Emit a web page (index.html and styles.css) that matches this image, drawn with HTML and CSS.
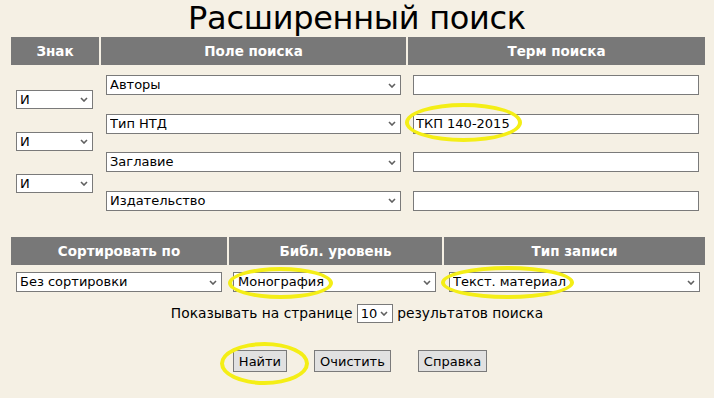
FILE: index.html
```html
<!DOCTYPE html>
<html lang="ru">
<head>
<meta charset="utf-8">
<title>Расширенный поиск</title>
<link rel="stylesheet" href="styles.css">
</head>
<body>
<div class="page">
  <h1 class="title">Расширенный поиск</h1>

  <div class="table main">
    <div class="th">Знак</div>
    <div class="th">Поле поиска</div>
    <div class="th">Терм поиска</div>

    <div class="col col-sign">
      <select class="sel sel-sign"><option>И</option></select>
      <select class="sel sel-sign"><option>И</option></select>
      <select class="sel sel-sign"><option>И</option></select>
    </div>
    <div class="col col-field">
      <select class="sel sel-field"><option>Авторы</option></select>
      <select class="sel sel-field"><option>Тип НТД</option></select>
      <select class="sel sel-field"><option>Заглавие</option></select>
      <select class="sel sel-field"><option>Издательство</option></select>
    </div>
    <div class="col col-term">
      <input class="inp" type="text" value="">
      <input class="inp" type="text" value="ТКП 140-2015">
      <input class="inp" type="text" value="">
      <input class="inp" type="text" value="">
    </div>
  </div>

  <div class="table sort">
    <div class="th">Сортировать по</div>
    <div class="th">Библ. уровень</div>
    <div class="th">Тип записи</div>
    <div class="cell cell-a"><select class="sel sel-wide"><option>Без сортировки</option></select></div>
    <div class="cell cell-b"><select class="sel sel-wide"><option>Монография</option></select></div>
    <div class="cell cell-c"><select class="sel sel-wide"><option>Текст. материал</option></select></div>
  </div>

  <div class="perpage">Показывать на странице <select class="sel sel-num"><option>10</option></select> результатов поиска</div>

  <div class="buttons">
    <button class="btn" type="button">Найти</button>
    <button class="btn" type="button">Очистить</button>
    <button class="btn" type="button">Справка</button>
  </div>

  <span class="mark mark-term"></span>
  <span class="mark mark-level"></span>
  <span class="mark mark-type"></span>
  <span class="mark mark-find"></span>
</div>
</body>
</html>
```

FILE: styles.css
```css
html, body {
  margin: 0;
  padding: 0;
  background: #f5f0e4;
}

.page {
  position: relative;
  width: 714px;
  height: 398px;
  padding: 0 9px 0 11px;
  box-sizing: border-box;
  font-family: "DejaVu Sans", Verdana, sans-serif;
  font-size: 13px;
  color: #000;
}

.title {
  margin: 0;
  height: 37px;
  font-size: 32px;
  font-weight: normal;
  line-height: 37px;
  text-align: center;
  letter-spacing: -0.3px;
  padding-right: 2px;
}

.table {
  display: grid;
  column-gap: 2px;
  grid-template-rows: 28px auto;
}

.main {
  grid-template-columns: 88px 305px 297px;
  height: 200px;
  grid-template-rows: 28px 1fr;
}

.sort {
  grid-template-columns: 216px 213px 261px;
}

.th {
  background: #787878;
  color: #fff;
  font-weight: bold;
  font-size: 13.5px;
  height: 28px;
  line-height: 28px;
  text-align: center;
}

.col {
  display: flex;
  flex-direction: column;
  align-items: flex-start;
}

.col-sign {
  padding: 25px 0 0 5px;
  gap: 23px;
}

.col-field {
  padding: 10px 0 0 5px;
  gap: 18.5px;
}

.col-term {
  padding: 10px 0 0 5px;
  gap: 18.5px;
}

.sel {
  -webkit-appearance: none;
  appearance: none;
  box-sizing: border-box;
  height: 20px;
  margin: 0;
  padding: 0 14px 0 3px;
  border: 1px solid #7a7a7a;
  border-radius: 0;
  background: #fff url("data:image/svg+xml,%3Csvg xmlns='http://www.w3.org/2000/svg' width='8' height='5'%3E%3Cpath d='M1 1l3 3 3-3' fill='none' stroke='%23606060' stroke-width='1.6'/%3E%3C/svg%3E") no-repeat right 4px center;
  font-family: "DejaVu Sans", Verdana, sans-serif;
  font-size: 13px;
  line-height: 18px;
  color: #000;
}

.sel-sign {
  width: 77px;
  height: 19px;
}

.sel-field {
  width: 295px;
}

.inp {
  box-sizing: border-box;
  width: 286px;
  height: 20px;
  margin: 0;
  padding: 0 2px;
  border: 1px solid #7a7a7a;
  border-radius: 0;
  background: #fff;
  font-family: "DejaVu Sans", Verdana, sans-serif;
  font-size: 13px;
  color: #000;
}

.cell {
  padding-top: 7px;
}

.cell-a { padding-left: 5px; }
.cell-a .sel { width: 206px; }
.cell-b { padding-left: 4px; }
.cell-b .sel { width: 203px; padding-left: 4px; }
.cell-c { padding-left: 5px; }
.cell-c .sel { width: 251px; }

.perpage {
  margin-top: 12px;
  height: 19px;
  line-height: 19px;
  text-align: center;
  font-size: 13.8px;
  padding-right: 2px;
}

.sel-num {
  width: 36px;
  height: 19px;
  vertical-align: top;
}

.buttons {
  margin-top: 27px;
  display: flex;
  justify-content: center;
  gap: 27px;
  padding-left: 4px;
}

.btn {
  box-sizing: border-box;
  height: 22px;
  padding: 0 5px;
  border: 1px solid #7a7a7a;
  border-radius: 0;
  background: #e1e1e1;
  font-family: "DejaVu Sans", Verdana, sans-serif;
  font-size: 13px;
  color: #000;
}

.mark {
  position: absolute;
  box-sizing: border-box;
  border: 4px solid #f4ee16;
  border-radius: 50%;
  pointer-events: none;
}

.mark-term  { left: 405px; top: 103px; width: 117px; height: 39px; }
.mark-level { left: 228px; top: 267px; width: 105px; height: 32px; }
.mark-type  { left: 441px; top: 266px; width: 133px; height: 33px; }
.mark-find  { left: 220px; top: 342px; width: 89px;  height: 43px; }
```
